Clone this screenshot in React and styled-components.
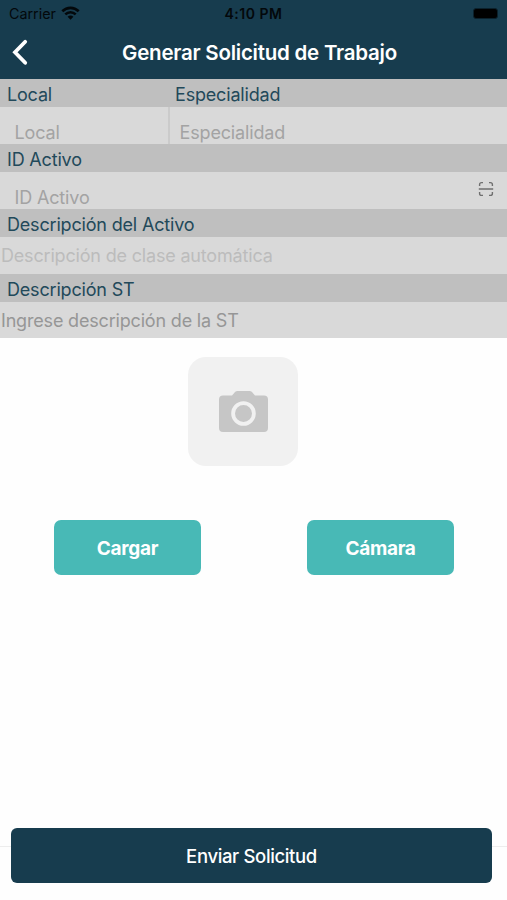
import React from 'react'
import styled, { createGlobalStyle } from 'styled-components'

const App = () => {
  return (
    <>
      <GlobalStyle />
      <Screen>
        <Header>
          <StatusBar>
            <Carrier>
              <Text $size={14.3}>Carrier</Text>
              <WifiIcon />
            </Carrier>
            <Text $size={14} $weight={600} $spacing={0.5}>4:10 PM</Text>
            <BatterySlot>
              <Battery />
            </BatterySlot>
          </StatusBar>
          <NavBar>
            <BackIcon />
            <Title $size={20.5} $weight={600} $spacing={-0.24}>Generar Solicitud de Trabajo</Title>
          </NavBar>
        </Header>

        <Labels>
          <Label>Local</Label>
          <Label>Especialidad</Label>
        </Labels>
        <Fields>
          <Field $inset={14.5}>Local</Field>
          <Field $inset={9.5} $divided>Especialidad</Field>
        </Fields>
        <Label>ID Activo</Label>
        <Field $inset={14.5}>
          ID Activo
          <ScanIcon />
        </Field>
        <Label>Descripción del Activo</Label>
        <TextArea $color="#bcbcbc">Descripción de clase automática</TextArea>
        <Label>Descripción ST</Label>
        <TextArea $color="#969696">Ingrese descripción de la ST</TextArea>

        <Preview>
          <CameraIcon />
        </Preview>
        <Actions>
          <ActionButton>Cargar</ActionButton>
          <ActionButton>Cámara</ActionButton>
        </Actions>
        <Footer>
          <SubmitButton>Enviar Solicitud</SubmitButton>
        </Footer>
      </Screen>
    </>
  )
}

const WifiIcon = () => (
  <svg width="19" height="15" viewBox="0 0 19 15" fill="none" stroke="#03080b" strokeWidth="2.6">
    <path d="M1.3 5.3C6 .7 13 .7 17.7 5.3" />
    <path d="M4.3 8.4C7.3 5.5 11.7 5.5 14.7 8.4" />
    <path d="M6.6 10.7C8.3 9.2 10.7 9.2 12.4 10.7L9.5 13.8Z" fill="#03080b" stroke="none" />
  </svg>
)

const BackIcon = () => (
  <svg width="17" height="27" viewBox="0 0 17 27" fill="none" stroke="#fff" strokeWidth="3.8" strokeLinecap="round" strokeLinejoin="miter">
    <path d="M14.2 2.8L4 13.3L14.2 23.8" />
  </svg>
)

const ScanIcon = () => (
  <svg width="16" height="16" viewBox="0 0 16 16" fill="none" stroke="#6f6f6f" strokeWidth="1.4">
    <path d="M1.6 5V3.6Q1.6 1.6 3.6 1.6H5M11 1.6H12.4Q14.4 1.6 14.4 3.6V5M14.4 11V12.4Q14.4 14.4 12.4 14.4H11M5 14.4H3.6Q1.6 14.4 1.6 12.4V11M.8 8H15.2" />
  </svg>
)

const CameraIcon = () => (
  <svg width="49" height="42" viewBox="0 0 49 42">
    <path d="M4 4.5H13L16 1Q17 0 18.5 0H30.5Q32 0 33 1L36 4.5H45Q49 4.5 49 8.5V37Q49 41 45 41H4Q0 41 0 37V8.5Q0 4.5 4 4.5Z" fill="#c6c6c6" />
    <circle cx="24.5" cy="22.5" r="10.4" fill="none" stroke="#f1f1f1" strokeWidth="3.8" />
  </svg>
)

const GlobalStyle = createGlobalStyle`
* {
  box-sizing: border-box;
}
body {
  margin: 0;
  background: #fff;
}
`
const Screen = styled.div`
width: 100%;
height: 900px;
display: flex;
flex-direction: column;
overflow: hidden;
background-color: #fefefe;
font-family: Inter, "Liberation Sans", sans-serif;
`
const Text = styled.span`
font-size: ${(p) => p.$size}px;
font-weight: ${(p) => p.$weight || 400};
letter-spacing: ${(p) => p.$spacing || 0}px;
white-space: nowrap;
`
const Header = styled.div`
height: 79px;
flex-shrink: 0;
background-color: #173c4e;
`
const StatusBar = styled.div`
height: 27px;
display: grid;
grid-template-columns: 1fr auto 1fr;
align-items: center;
padding: 0 9px;
color: #03080b;
`
const Carrier = styled.div`
display: flex;
align-items: center;
gap: 5px;
`
const BatterySlot = styled.div`
display: flex;
justify-content: flex-end;
`
const Battery = styled.div`
width: 25px;
height: 11px;
border: 1px solid #0b212c;
border-radius: 3px;
background-color: #000;
`
const NavBar = styled.div`
height: 50px;
display: flex;
align-items: center;
padding-left: 11px;
`
const Title = styled(Text)`
flex: 1;
padding-right: 16px;
text-align: center;
color: #fff;
`
const Labels = styled.div`
display: grid;
grid-template-columns: 168px 1fr;
`
const Fields = styled(Labels)``
const Label = styled.div`
height: 28px;
flex-shrink: 0;
padding: 3px 7px 0;
line-height: 26px;
font-size: 18px;
letter-spacing: -0.18px;
color: #22495a;
background-color: #bfbfbf;
`
const Field = styled.div`
height: 37px;
flex-shrink: 0;
display: flex;
justify-content: space-between;
padding: 13px 13px 0 ${(p) => p.$inset}px;
border-left: ${(p) => (p.$divided ? '2px solid #cbcbcb' : 'none')};
line-height: 26px;
font-size: 18px;
letter-spacing: -0.15px;
color: #a3a3a3;
background-color: #d9d9d9;

svg {
  margin-top: -4px;
}
`
const TextArea = styled.div`
height: 36.5px;
flex-shrink: 0;
padding-left: 1px;
line-height: 38px;
font-size: 18px;
letter-spacing: -0.18px;
color: ${(p) => p.$color};
background-color: #d9d9d9;
`
const Preview = styled.div`
width: 110px;
height: 109px;
flex-shrink: 0;
display: flex;
align-items: center;
justify-content: center;
margin: 19px 0 0 188px;
border-radius: 18px;
background-color: #f1f1f1;
`
const Actions = styled.div`
display: flex;
justify-content: space-between;
margin-top: 54px;
padding: 0 53px 0 54px;
`
const ActionButton = styled.button`
width: 147px;
height: 55px;
padding: 2px 0 0;
border: 0;
border-radius: 7px;
font: 700 19px Inter, "Liberation Sans", sans-serif;
letter-spacing: -0.3px;
color: #fff;
background-color: #48b9b6;
`
const Footer = styled.div`
height: 54px;
flex-shrink: 0;
margin-top: auto;
padding: 0 15px 0 11px;
border-top: 1px solid #ededed;
`
const SubmitButton = styled.button`
display: block;
width: 100%;
height: 55px;
margin-top: -19px;
padding: 0;
border: 0;
border-radius: 6px;
font: 500 18.5px Inter, "Liberation Sans", sans-serif;
letter-spacing: -0.36px;
color: #fff;
background-color: #173c4e;
`

export default App
